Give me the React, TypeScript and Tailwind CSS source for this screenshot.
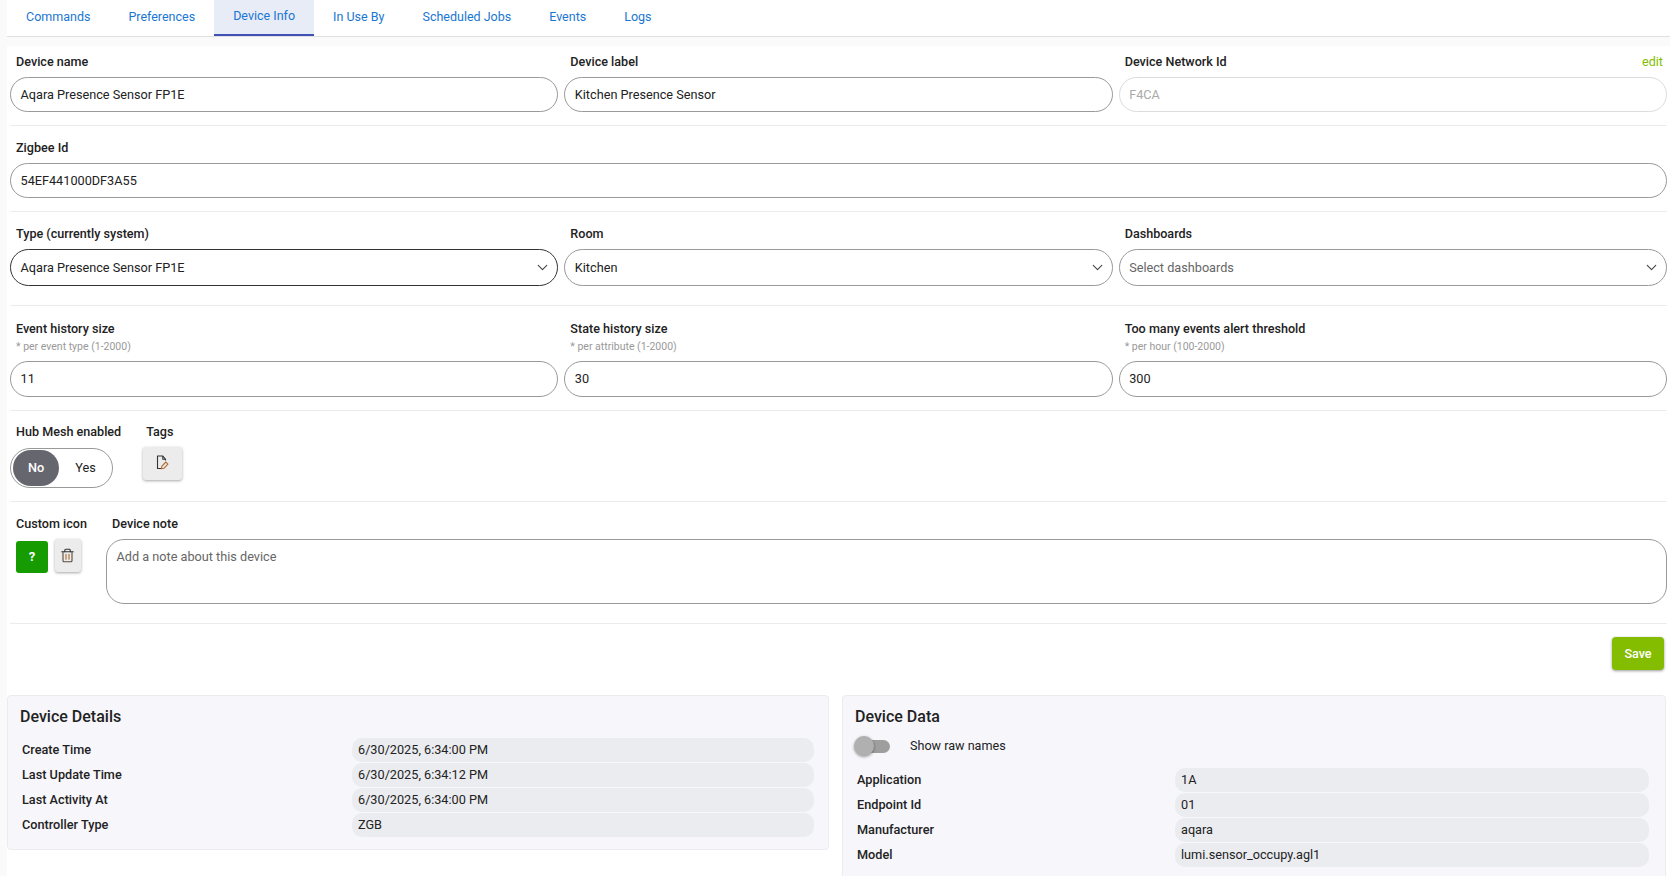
import { ChevronDown } from "lucide-react";

const tabs = ["Commands", "Preferences", "Device Info", "In Use By", "Scheduled Jobs", "Events", "Logs"];

const detailRows = [
  ["Create Time", "6/30/2025, 6:34:00 PM"],
  ["Last Update Time", "6/30/2025, 6:34:12 PM"],
  ["Last Activity At", "6/30/2025, 6:34:00 PM"],
  ["Controller Type", "ZGB"],
];

const dataRows = [
  ["Application", "1A"],
  ["Endpoint Id", "01"],
  ["Manufacturer", "aqara"],
  ["Model", "lumi.sensor_occupy.agl1"],
];

const Label = ({ children }: { children: React.ReactNode }) => (
  <div className="pl-[6px] text-[12.6px] leading-[16px] font-medium text-[#222]">{children}</div>
);

const Divider = () => <div className="h-px bg-[#ececf0]" />;

const TextField = ({ value, muted, tall }: { value: string; muted?: boolean; tall?: boolean }) => (
  <div
    className={`flex items-center rounded-[18px] border bg-white pl-[9.5px] text-[12.7px] ${tall ? "h-[36px]" : "h-[35px]"} ${
      muted ? "border-[#dcdcdc] text-[#aaa]" : "border-[#999] text-[#222]"
    }`}
  >
    {value}
  </div>
);

const SelectField = ({ value, dark, placeholder }: { value: string; dark?: boolean; placeholder?: boolean }) => (
  <div
    className={`flex h-[37px] items-center justify-between rounded-[19px] border bg-white pr-[6px] pl-[9.5px] text-[12.7px] ${
      dark ? "border-[#333]" : "border-[#999]"
    } ${placeholder ? "text-[#666]" : "text-[#222]"}`}
  >
    {value}
    <ChevronDown size={17} strokeWidth={1.6} className="text-[#444]" />
  </div>
);

const InfoRows = ({ rows, labelWidth }: { rows: string[][]; labelWidth: string }) => (
  <div className="flex flex-col gap-[1px]">
    {rows.map(([label, value]) => (
      <div key={label} className="flex h-[24px] items-center text-[12.7px]">
        <div className={`${labelWidth} shrink-0 pl-[2px] font-medium text-[#222]`}>{label}</div>
        <div className="flex h-full flex-1 items-center rounded-[10px] bg-[#ebecf0] pl-[6px] text-[#222]">{value}</div>
      </div>
    ))}
  </div>
);

export default function App() {
  return (
    <div className="h-[876px] overflow-hidden bg-[#fafafa] pl-[7px] [font-family:Roboto,sans-serif]">
      {/* Tabs */}
      <div className="flex h-[37px] border-b border-[#e0e0e0] bg-white">
        {tabs.map((tab) => (
          <div
            key={tab}
            className={`flex h-[36px] items-center px-[19px] pb-[1px] text-[12.5px] text-[#1976d2] ${
              tab === "Device Info" ? "border-b-2 border-[#3f51b5] bg-[#e8ecf7]" : ""
            }`}
          >
            {tab}
          </div>
        ))}
      </div>

      <div className="mt-[9px] bg-white">
        <div className="px-[3px] pt-[8px]">
          {/* Name row */}
          <div className="grid grid-cols-3 gap-x-[6px]">
            <div>
              <Label>Device name</Label>
              <div className="mt-[7px]"><TextField value="Aqara Presence Sensor FP1E" /></div>
            </div>
            <div>
              <Label>Device label</Label>
              <div className="mt-[7px]"><TextField value="Kitchen Presence Sensor" /></div>
            </div>
            <div>
              <div className="flex justify-between">
                <Label>Device Network Id</Label>
                <span className="pr-[4px] text-[12.6px] leading-[16px] text-[#84bd00]">edit</span>
              </div>
              <div className="mt-[7px]"><TextField value="F4CA" muted /></div>
            </div>
          </div>
          <div className="mt-[13px]"><Divider /></div>

          {/* Zigbee */}
          <div className="pt-[14px]">
            <Label>Zigbee Id</Label>
            <div className="mt-[7px]"><TextField value="54EF441000DF3A55" /></div>
          </div>
          <div className="mt-[13px]"><Divider /></div>

          {/* Selects */}
          <div className="grid grid-cols-3 gap-x-[6px] pt-[14px]">
            <div>
              <Label>Type (currently system)</Label>
              <div className="mt-[7px]"><SelectField value="Aqara Presence Sensor FP1E" dark /></div>
            </div>
            <div>
              <Label>Room</Label>
              <div className="mt-[7px]"><SelectField value="Kitchen" /></div>
            </div>
            <div>
              <Label>Dashboards</Label>
              <div className="mt-[7px]"><SelectField value="Select dashboards" placeholder /></div>
            </div>
          </div>
          <div className="mt-[19px]"><Divider /></div>

          {/* History sizes */}
          <div className="grid grid-cols-3 gap-x-[6px] pt-[15px]">
            {[
              ["Event history size", "* per event type (1-2000)", "11"],
              ["State history size", "* per attribute (1-2000)", "30"],
              ["Too many events alert threshold", "* per hour (100-2000)", "300"],
            ].map(([title, hint, value]) => (
              <div key={title}>
                <Label>{title}</Label>
                <div className="mt-[3px] pl-[6px] text-[10.5px] leading-[14px] text-[#999]">{hint}</div>
                <div className="mt-[7px]"><TextField value={value} tall /></div>
              </div>
            ))}
          </div>
          <div className="mt-[13px]"><Divider /></div>

          {/* Hub mesh and tags */}
          <div className="flex pt-[13px]">
            <div>
              <Label>Hub Mesh enabled</Label>
              <div className="mt-[8px] flex h-[40px] w-[103px] items-center rounded-[20px] border border-[#999] bg-white pl-[2px] text-[12.7px]">
                <div className="flex h-[36px] w-[46px] items-center justify-center rounded-[18px] bg-[#66666e] font-medium text-white">No</div>
                <div className="flex-1 text-center text-[#222]">Yes</div>
              </div>
            </div>
            <div className="ml-[25px]">
              <div className="text-[12.6px] leading-[16px] font-medium text-[#222]">Tags</div>
              <button className="mt-[7px] -ml-[3px] flex h-[33px] w-[39px] items-center justify-center rounded-[3px] bg-[#ececec] pb-[3px] shadow-[0_1px_3px_rgba(0,0,0,0.35)]">
                <svg width="17" height="17" viewBox="0 0 17 17" fill="none" stroke="#333" strokeWidth="1.1" strokeLinejoin="round">
                  <path d="M9 14.5H3.5V2h5.3l2.7 3.3v1.2" />
                  <path d="M8.8 2v3.3h2.7" />
                  <path d="M7.4 14.8l.5-2.6 4-4.2 2 2.2-4 4.1z" stroke="#b06a2c" />
                </svg>
              </button>
            </div>
          </div>
          <div className="mt-[13px]"><Divider /></div>

          {/* Icon and note */}
          <div className="flex pt-[14px]">
            <div className="w-[96px] shrink-0">
              <Label>Custom icon</Label>
              <div className="mt-[7px] flex items-start gap-[7px] pl-[6px]">
                <div className="mt-[2px] flex h-[32px] w-[32px] items-center justify-center rounded-[3px] bg-[#169c00] text-[13px] font-bold text-white">?</div>
                <button className="flex h-[33px] w-[26px] items-center justify-center rounded-[3px] bg-[#ececec] pr-[1px] pb-[1px] shadow-[0_1px_3px_rgba(0,0,0,0.35)]">
                  <svg width="15" height="15" viewBox="0 0 15 15" fill="none" stroke="#333" strokeWidth="1.1" strokeLinecap="round" strokeLinejoin="round">
                    <path d="M1.8 3.8h11.4" />
                    <path d="M4.8 3.8V2.2a.9.9 0 0 1 .9-.9h3.6a.9.9 0 0 1 .9.9v1.6" />
                    <path d="M3 3.8v8.9a1 1 0 0 0 1 1h7a1 1 0 0 0 1-1V3.8" stroke="#5a4a38" />
                    <path d="M6 6.4v4.8M9 6.4v4.8" stroke="#b06a2c" />
                  </svg>
                </button>
              </div>
            </div>
            <div className="flex-1">
              <Label>Device note</Label>
              <div className="mt-[7px] h-[65px] rounded-[18px] border border-[#999] bg-white pt-[9px] pl-[9.5px] text-[12.7px] leading-[16px] text-[#666]">
                Add a note about this device
              </div>
            </div>
          </div>
          <div className="mt-[19px]"><Divider /></div>

          <div className="flex justify-end pt-[13px] pr-[3px]">
            <button className="h-[33px] w-[52px] rounded-[4px] bg-[#84bd00] pt-[1px] text-[12.6px] font-medium text-white shadow-[0_1px_3px_rgba(0,0,0,0.4)]">Save</button>
          </div>
        </div>

        {/* Cards */}
        <div className="mt-[25px] flex items-start gap-[13px] pr-[4px]">
          <div className="w-[822px] rounded-[4px] border border-[#ececf0] bg-[#f6f6fb] pt-[11px] pr-[14px] pb-[12px] pl-[12px]">
            <div className="text-[16px] leading-[19px] font-medium text-[#222]">Device Details</div>
            <div className="mt-[12px]"><InfoRows rows={detailRows} labelWidth="w-[332px]" /></div>
          </div>
          <div className="h-[200px] flex-1 rounded-[4px] border border-[#ececf0] bg-[#f6f6fb] pt-[11px] pr-[16px] pl-[12px]">
            <div className="text-[16px] leading-[19px] font-medium text-[#222]">Device Data</div>
            <div className="mt-[10px] flex h-[20px] items-center">
              <div className="relative h-[13px] w-[35px] rounded-full bg-[#9e9e9e]">
                <div className="absolute top-[-4px] left-[-1px] h-[20px] w-[20px] rounded-full bg-[#b0b0b0] shadow-[0_1px_3px_rgba(0,0,0,0.4)]" />
              </div>
              <span className="ml-[20px] text-[12.6px] text-[#222]">Show raw names</span>
            </div>
            <div className="mt-[12px]"><InfoRows rows={dataRows} labelWidth="w-[320px]" /></div>
          </div>
        </div>
      </div>
    </div>
  );
}
